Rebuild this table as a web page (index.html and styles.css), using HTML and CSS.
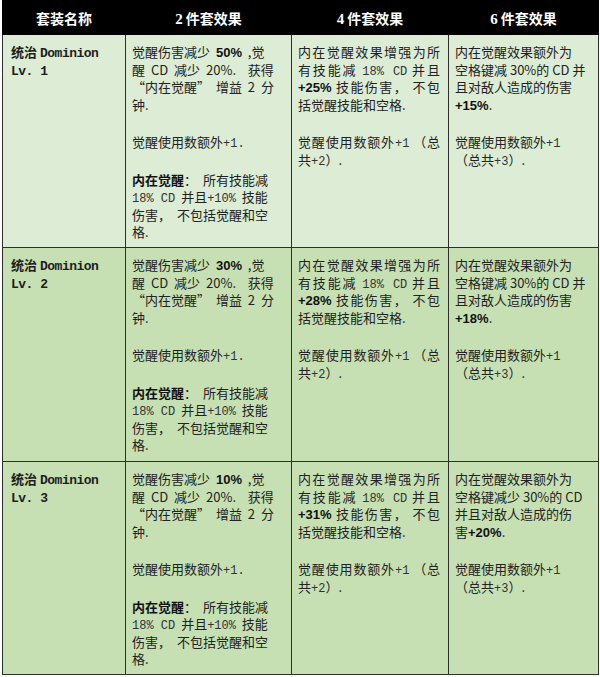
FILE: index.html
```html
<!DOCTYPE html>
<html lang="zh-CN">
<head>
<meta charset="utf-8">
<title>统治 Dominion 套装效果</title>
<link rel="stylesheet" href="styles.css">
</head>
<body>
<table class="sets">
  <colgroup>
    <col class="c1"><col class="c2"><col class="c3"><col class="c4">
  </colgroup>
  <thead>
    <tr>
      <th>套装名称</th>
      <th><span class="hn">2</span> 件套效果</th>
      <th><span class="hn">4</span> 件套效果</th>
      <th><span class="hn">6</span> 件套效果</th>
    </tr>
  </thead>
  <tbody>
    <tr class="r1">
      <td class="name"><span class="l">统治<span class="lat dom">Dominion</span></span><span class="l"><span class="lat">Lv. 1</span></span></td>
      <td class="w">
        <div class="p">
          <span class="l">觉醒伤害减少 <b class="pc">50%</b> ,觉</span>
          <span class="l">醒 CD 减少 20%. &nbsp;获得</span>
          <span class="l">“内在觉醒” 增益 2 分</span>
          <span class="l">钟.</span>
        </div>
        <div class="p"><span class="l">觉醒使用数额外<span class="m">+1.</span></span></div>
        <div class="p">
          <span class="l"><b>内在觉醒</b>： 所有技能减</span>
          <span class="l"><span class="m">18% CD</span> 并且<span class="m">+10%</span> 技能</span>
          <span class="l">伤害， 不包括觉醒和空</span>
          <span class="l">格.</span>
        </div>
      </td>
      <td class="j">
        <div class="p">
          <span class="l">内在觉醒效果增强为所</span>
          <span class="l">有技能减 <span class="m">18% CD</span> 并且</span>
          <span class="l"><b class="pc">+25%</b> 技能伤害， 不包</span>
          <span class="l e">括觉醒技能和空格.</span>
        </div>
        <div class="p">
          <span class="l">觉醒使用数额外<span class="m">+1</span> （总</span>
          <span class="l e">共<span class="m">+2</span>）.</span>
        </div>
      </td>
      <td>
        <div class="p">
          <span class="l">内在觉醒效果额外为</span>
          <span class="l">空格键减 30%的 CD 并</span>
          <span class="l">且对敌人造成的伤害</span>
          <span class="l"><b class="pc">+15%</b>.</span>
        </div>
        <div class="p">
          <span class="l">觉醒使用数额外<span class="m">+1</span></span>
          <span class="l">（总共<span class="m">+3</span>）.</span>
        </div>
      </td>
    </tr>
    <tr class="r2">
      <td class="name"><span class="l">统治<span class="lat dom">Dominion</span></span><span class="l"><span class="lat">Lv. 2</span></span></td>
      <td class="w">
        <div class="p">
          <span class="l">觉醒伤害减少 <b class="pc">30%</b> ,觉</span>
          <span class="l">醒 CD 减少 20%. &nbsp;获得</span>
          <span class="l">“内在觉醒” 增益 2 分</span>
          <span class="l">钟.</span>
        </div>
        <div class="p"><span class="l">觉醒使用数额外<span class="m">+1.</span></span></div>
        <div class="p">
          <span class="l"><b>内在觉醒</b>： 所有技能减</span>
          <span class="l"><span class="m">18% CD</span> 并且<span class="m">+10%</span> 技能</span>
          <span class="l">伤害， 不包括觉醒和空</span>
          <span class="l">格.</span>
        </div>
      </td>
      <td class="j">
        <div class="p">
          <span class="l">内在觉醒效果增强为所</span>
          <span class="l">有技能减 <span class="m">18% CD</span> 并且</span>
          <span class="l"><b class="pc">+28%</b> 技能伤害， 不包</span>
          <span class="l e">括觉醒技能和空格.</span>
        </div>
        <div class="p">
          <span class="l">觉醒使用数额外<span class="m">+1</span> （总</span>
          <span class="l e">共<span class="m">+2</span>）.</span>
        </div>
      </td>
      <td>
        <div class="p">
          <span class="l">内在觉醒效果额外为</span>
          <span class="l">空格键减 30%的 CD 并</span>
          <span class="l">且对敌人造成的伤害</span>
          <span class="l"><b class="pc">+18%</b>.</span>
        </div>
        <div class="p">
          <span class="l">觉醒使用数额外<span class="m">+1</span></span>
          <span class="l">（总共<span class="m">+3</span>）.</span>
        </div>
      </td>
    </tr>
    <tr class="r3">
      <td class="name"><span class="l">统治<span class="lat dom">Dominion</span></span><span class="l"><span class="lat">Lv. 3</span></span></td>
      <td class="w">
        <div class="p">
          <span class="l">觉醒伤害减少 <b class="pc">10%</b> ,觉</span>
          <span class="l">醒 CD 减少 20%. &nbsp;获得</span>
          <span class="l">“内在觉醒” 增益 2 分</span>
          <span class="l">钟.</span>
        </div>
        <div class="p"><span class="l">觉醒使用数额外<span class="m">+1.</span></span></div>
        <div class="p">
          <span class="l"><b>内在觉醒</b>： 所有技能减</span>
          <span class="l"><span class="m">18% CD</span> 并且<span class="m">+10%</span> 技能</span>
          <span class="l">伤害， 不包括觉醒和空</span>
          <span class="l">格.</span>
        </div>
      </td>
      <td class="j">
        <div class="p">
          <span class="l">内在觉醒效果增强为所</span>
          <span class="l">有技能减 <span class="m">18% CD</span> 并且</span>
          <span class="l"><b class="pc">+31%</b> 技能伤害， 不包</span>
          <span class="l e">括觉醒技能和空格.</span>
        </div>
        <div class="p">
          <span class="l">觉醒使用数额外<span class="m">+1</span> （总</span>
          <span class="l e">共<span class="m">+2</span>）.</span>
        </div>
      </td>
      <td>
        <div class="p">
          <span class="l">内在觉醒效果额外为</span>
          <span class="l">空格键减少 30%的 CD</span>
          <span class="l">并且对敌人造成的伤</span>
          <span class="l">害<b class="pc">+20%</b>.</span>
        </div>
        <div class="p">
          <span class="l">觉醒使用数额外<span class="m">+1</span></span>
          <span class="l">（总共<span class="m">+3</span>）.</span>
        </div>
      </td>
    </tr>
  </tbody>
</table>
</body>
</html>
```

FILE: styles.css
```css
html, body {
  margin: 0;
  padding: 0;
  background: #ffffff;
}

.sets {
  border-collapse: collapse;
  table-layout: fixed;
  width: 597px;
  margin-left: 2px;
  font-family: "Noto Sans CJK SC", sans-serif;
  font-size: 13px;
  color: #222222;
}

.c1 { width: 123px; }
.c2 { width: 166px; }
.c3 { width: 157px; }
.c4 { width: 150px; }

.sets th {
  background: #000000;
  color: #ffffff;
  height: 33px;
  padding: 0;
  font-size: 14px;
  font-weight: bold;
  text-align: center;
  vertical-align: middle;
  border: 1px solid #000000;
  border-left-color: #555555;
}

.sets th:first-child {
  border-left-color: #000000;
}

.hn {
  font-family: "Liberation Serif", serif;
  font-size: 15px;
}

.sets td {
  border: 1px solid #2e2e2e;
  vertical-align: top;
  padding: 8px 8px 0 6px;
  line-height: 17.5px;
}

.r1 { height: 213px; }
.r2 { height: 214px; }
.r3 { height: 213px; }

.r1 td { background: #dcecd5; }
.r2 td, .r3 td { background: #c6e0b4; }

.sets td.name {
  padding-left: 8px;
  font-weight: bold;
  color: #1e1e1e;
}

.lat {
  font-family: "Liberation Mono", monospace;
  font-weight: bold;
  font-size: 13px;
  letter-spacing: -0.5px;
}

.dom {
  margin-left: 3px;
}

.l {
  display: block;
  white-space: nowrap;
}

.l span, .l b {
  line-height: 1;
}

.p { margin: 0; }
.p + .p { margin-top: 20px; }

.w { word-spacing: 3px; }

.j { padding-right: 10px; }
.j .l {
  white-space: normal;
  text-align: justify;
  text-align-last: justify;
}
.j .l.e { text-align-last: left; }

.m {
  font-family: "Liberation Mono", monospace;
  font-size: 12px;
  color: #333333;
  word-spacing: 0;
}

.pc {
  font-family: "Liberation Sans", sans-serif;
  font-weight: bold;
}

b { font-weight: bold; color: #111111; }
```
